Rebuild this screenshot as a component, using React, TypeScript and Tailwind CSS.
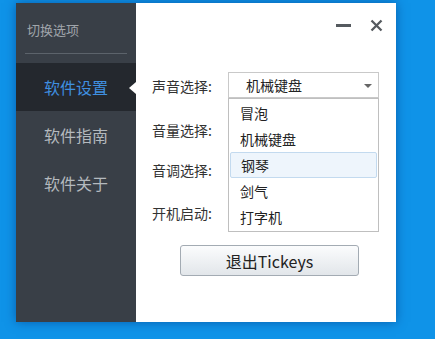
import React from "react";

const font = { fontFamily: '"Noto Sans CJK SC", "Noto Sans", sans-serif' };

export default function App() {
  const items = ["冒泡", "机械键盘", "钢琴", "剑气", "打字机"];
  return (
    <div
      className="w-[435px] h-[339px] bg-[#0f93e8] overflow-hidden pt-[3px] pl-[16px]"
      style={font}
    >
      <div className="flex w-[380px] h-[319px] shadow-[0_0_10px_rgba(0,50,120,0.55)]">
        {/* Sidebar */}
        <div className="w-[120px] h-full bg-[#393f47] flex flex-col">
          <div className="h-[50px] pl-[11px] pt-[18px] text-[13px] leading-[18px] text-[#a0a5ab]">
            切换选项
          </div>
          <div className="mx-[9px] h-px bg-[#5c636b]" />
          <div className="h-[9px]" />
          <div className="relative h-[48px] bg-[#24282e] flex items-center justify-center text-[16px] text-[#3f8fe0]">
            软件设置
            <div className="absolute right-0 top-[19px] w-0 h-0 border-y-[6px] border-y-transparent border-r-[7px] border-r-white" />
          </div>
          <div className="h-[48px] flex items-center justify-center text-[16px] text-[#b4b9be]">
            软件指南
          </div>
          <div className="h-[48px] flex items-center justify-center text-[16px] text-[#b4b9be]">
            软件关于
          </div>
        </div>

        {/* Panel */}
        <div className="flex-1 h-full bg-white flex flex-col">
          <div className="h-[44px] flex items-center justify-end pr-[13px] gap-[19px]">
            <div className="w-[15px] h-[3px] bg-[#555a5f]" />
            <svg width="13" height="13" viewBox="0 0 13 13">
              <path d="M1.5 1.5 L11.5 11.5 M11.5 1.5 L1.5 11.5" stroke="#555a5f" strokeWidth="2.3" />
            </svg>
          </div>

          <div className="mt-[25px] h-[26px] flex items-center pl-[16px]">
            <div className="w-[76px] text-[14px] text-[#333] pt-[3px]">声音选择:</div>
            <div className="relative w-[151px] h-[26px]">
              <div className="w-full h-full border border-[#c9c9c9] bg-white flex items-center pl-[17px] text-[14px] text-[#222]">
                机械键盘
                <div className="absolute right-[7px] top-[12px] w-0 h-0 border-x-[4px] border-x-transparent border-t-[4px] border-t-[#666]" />
              </div>
              <div className="absolute left-0 top-[26px] w-[151px] h-[134px] border border-[#bfbfbf] bg-white z-10 pt-[1px]">
                {items.map((t, i) => (
                  <div
                    key={t}
                    className={
                      i === 2
                        ? "h-[26px] mx-px flex items-center pl-[10px] text-[14px] text-[#222] bg-[#eef5fc] border border-[#c3daef] rounded-[2px]"
                        : "h-[26px] flex items-center pl-[11px] text-[14px] text-[#222]"
                    }
                  >
                    {t}
                  </div>
                ))}
              </div>
            </div>
          </div>

          <div className="mt-[19px] h-[26px] flex items-center pl-[16px] text-[14px] text-[#333]">
            音量选择:
          </div>
          <div className="mt-[14px] h-[26px] flex items-center pl-[16px] text-[14px] text-[#333]">
            音调选择:
          </div>
          <div className="mt-[17px] h-[26px] flex items-center pl-[16px] text-[14px] text-[#333]">
            开机启动:
          </div>

          <div className="mt-[19px] pl-[44px]">
            <button className="w-[179px] h-[31px] rounded-[3px] border border-[#a3abb3] bg-gradient-to-b from-[#fbfcfd] to-[#e2e6ea] text-[16px] text-[#222] flex items-center justify-center">
              退出Tickeys
            </button>
          </div>
        </div>
      </div>
    </div>
  );
}
